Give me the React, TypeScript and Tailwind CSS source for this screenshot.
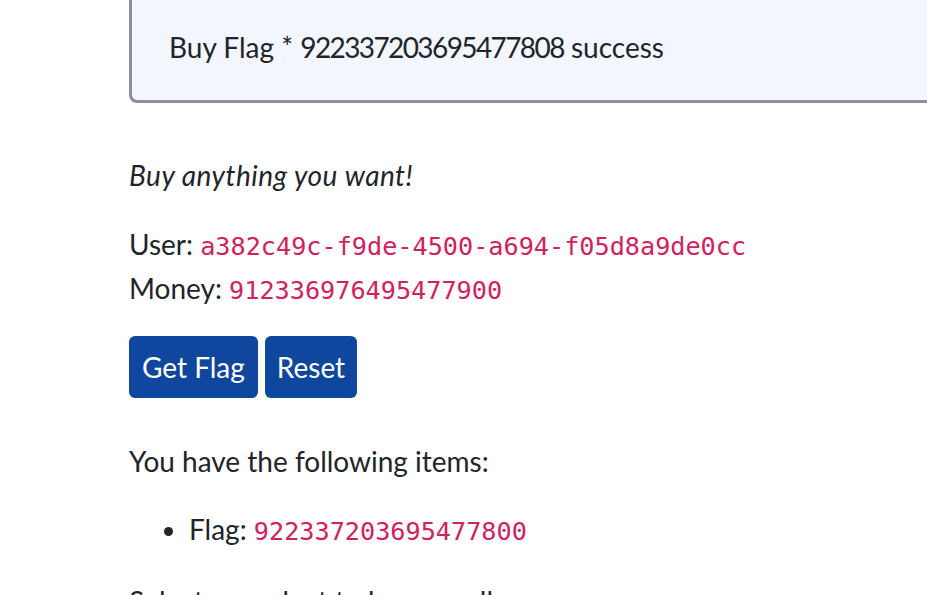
export default function App() {
  const code = "font-['DejaVu_Sans_Mono',monospace] text-[25.2px] leading-none text-[#d3215e]";

  return (
    <div className="w-screen h-[595px] overflow-hidden bg-white text-[#212529] font-['Lato',sans-serif] text-[28px] leading-[44px]">
      <div className="pl-[129px]">
        <div className="w-[900px] bg-[#f3f6fe] border-l-[3px] border-r-[3px] border-b-[3px] border-[#8a8e9f] rounded-b-[8px] pl-[37px] pt-[25px] pb-[31px]">
          Buy Flag * <span className="tracking-[-1.6px]">922337203695477808</span> success
        </div>

        <p className="mt-[50px] italic tracking-[0.5px]">Buy anything you want!</p>

        <p className="mt-[25px]">
          User: <code className={code}>a382c49c-f9de-4500-a694-f05d8a9de0cc</code>
          <br />
          Money: <code className={code}>912336976495477900</code>
        </p>

        <div className="mt-[26px] flex gap-[7px]">
          <button className="h-[62px] px-[13px] rounded-[6px] bg-[#0f479f] text-white">Get Flag</button>
          <button className="h-[62px] px-[12px] rounded-[6px] bg-[#0f479f] text-white">Reset</button>
        </div>

        <p className="mt-[41px]">You have the following items:</p>

        <ul className="mt-[24px] pl-[60px] list-disc">
          <li>
            Flag: <code className={code}>922337203695477800</code>
          </li>
        </ul>

        <p className="mt-[28px]">Select a product to buy or sell</p>
      </div>
    </div>
  );
}
